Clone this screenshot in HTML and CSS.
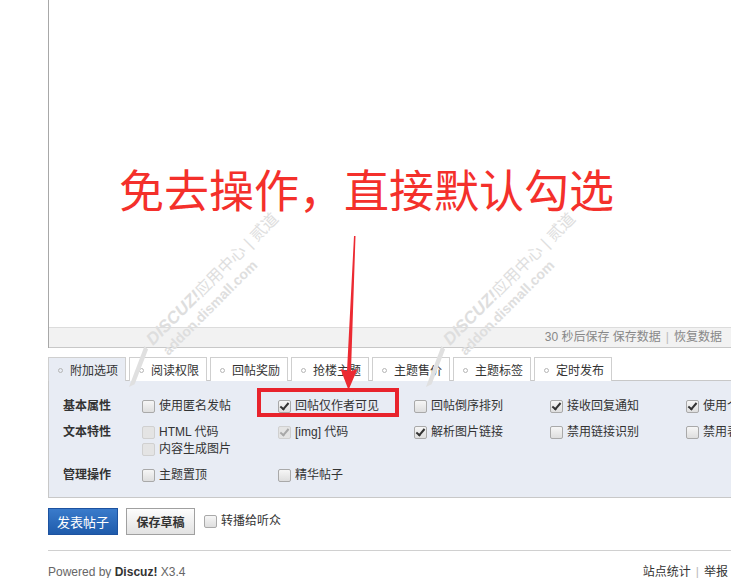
FILE: index.html
```html
<!DOCTYPE html>
<html lang="zh-CN">
<head>
    <meta charset="UTF-8">
    <title>发表帖子</title>
    <link rel="stylesheet" href="styles.css">
</head>
<body>
    <div class="page">
        <!-- Editor -->
        <div class="editor">
            <div class="editor-body">
                <p class="note">免去操作，直接默认勾选</p>
            </div>
            <div class="editor-status">30 秒后保存 <a>保存数据</a><span class="pipe">|</span><a>恢复数据</a></div>
        </div>

        <!-- Extra option tabs -->
        <ul class="tabs">
            <li class="tab active">附加选项</li>
            <li class="tab">阅读权限</li>
            <li class="tab">回帖奖励</li>
            <li class="tab">抢楼主题</li>
            <li class="tab">主题售价</li>
            <li class="tab">主题标签</li>
            <li class="tab">定时发布</li>
        </ul>

        <div class="options">
            <div class="opt-row">
                <span class="opt-label">基本属性</span>
                <label class="opt"><span class="cb"></span>使用匿名发帖</label>
                <label class="opt"><span class="cb checked"></span>回帖仅作者可见</label>
                <label class="opt"><span class="cb"></span>回帖倒序排列</label>
                <label class="opt"><span class="cb checked"></span>接收回复通知</label>
                <label class="opt"><span class="cb checked"></span>使用个人签名</label>
            </div>
            <div class="opt-row">
                <span class="opt-label">文本特性</span>
                <div class="opt-stack">
                    <label class="opt"><span class="cb disabled"></span>HTML 代码</label>
                    <label class="opt"><span class="cb disabled"></span>内容生成图片</label>
                </div>
                <label class="opt"><span class="cb checked disabled"></span>[img] 代码</label>
                <label class="opt"><span class="cb checked"></span>解析图片链接</label>
                <label class="opt"><span class="cb"></span>禁用链接识别</label>
                <label class="opt"><span class="cb"></span>禁用表情</label>
            </div>
            <div class="opt-row">
                <span class="opt-label">管理操作</span>
                <label class="opt"><span class="cb"></span>主题置顶</label>
                <label class="opt"><span class="cb"></span>精华帖子</label>
            </div>
        </div>

        <!-- Submit -->
        <div class="actions">
            <button class="btn btn-primary">发表帖子</button>
            <button class="btn btn-draft">保存草稿</button>
            <label class="opt"><span class="cb"></span>转播给听众</label>
        </div>

        <div class="footer">
            <p class="powered">Powered by <strong>Discuz!</strong> X3.4</p>
            <p class="footer-links"><a>站点统计</a><span class="pipe">|</span><a>举报</a></p>
        </div>
    </div>

    <!-- Annotation layer: watermarks, arrow, highlight box -->
    <svg class="overlay" width="731" height="578" viewBox="0 0 731 578">
        <g class="wm" transform="translate(153,346) rotate(-45)">
            <polygon class="wm-logo" points="-46,12 -6,-6 -6,-1 -40,14"/>
            <text class="wm-brand" x="0" y="0">DISCUZ!<tspan class="wm-cn">应用中心</tspan><tspan class="wm-cn" dx="5">| 贰道</tspan></text>
            <text class="wm-url" x="4" y="18">addon.dismall.com</text>
        </g>
        <g class="wm" transform="translate(450,346) rotate(-45)">
            <polygon class="wm-logo" points="-46,12 -6,-6 -6,-1 -40,14"/>
            <text class="wm-brand" x="0" y="0">DISCUZ!<tspan class="wm-cn">应用中心</tspan><tspan class="wm-cn" dx="5">| 贰道</tspan></text>
            <text class="wm-url" x="4" y="18">addon.dismall.com</text>
        </g>
        <polygon class="arrow" points="354,236 355.5,236 351,371 357.5,369 348.5,390 340.5,369 347,371"/>
        <rect class="highlight" x="259" y="390" width="138" height="25"/>
    </svg>
</body>
</html>
```

FILE: styles.css
```css
/* General */
html, body {
    overflow: hidden;
}

body {
    margin: 0;
    position: relative;
    width: 731px;
    height: 578px;
    background: #fff;
    color: #333;
    font-family: "Liberation Sans", "Noto Sans CJK SC", sans-serif;
    font-size: 12px;
    line-height: 17px;
}

a {
    color: inherit;
}

.page {
    margin-left: 48px;
    width: 683px;
}

/* Editor */
.editor {
    border-left: 1px solid #a8a8a8;
}

.editor-body {
    height: 327px;
    box-sizing: border-box;
    padding: 166px 0 0 70px;
}

.note {
    margin: 0;
    font-family: "Noto Sans CJK SC", sans-serif;
    font-size: 45px;
    line-height: 45px;
    color: #f4302b;
    white-space: nowrap;
}

.editor-status {
    height: 19px;
    line-height: 19px;
    border-top: 1px solid #dcdcdc;
    border-bottom: 1px solid #c8c8c8;
    background: #f2f2f2;
    color: #888;
    text-align: right;
    padding-right: 9px;
}

.pipe {
    margin: 0 5px;
    color: #bbb;
}

/* Tabs */
.tabs {
    list-style: none;
    margin: 9px 0 -1px;
    padding: 0;
    display: flex;
    gap: 3px;
    position: relative;
}

.tab {
    width: 78px;
    box-sizing: border-box;
    height: 24px;
    padding: 5px 0 0 9px;
    border: 1px solid #cfcfcf;
    border-bottom: none;
    background: #fff;
    white-space: nowrap;
}

.tab::before {
    content: "";
    display: inline-block;
    width: 3px;
    height: 3px;
    border: 1px solid #b5b5b5;
    border-radius: 50%;
    margin: 0 7px 2px 0;
    vertical-align: middle;
}

.tab.active {
    background: #e8ecf4;
}

/* Options panel */
.options {
    width: 800px;
    box-sizing: border-box;
    border: 1px solid #c8c8c8;
    background: #e8ecf4;
    padding: 17px 0 4px 14px;
}

.opt-row {
    display: grid;
    grid-template-columns: 79px repeat(5, 136px);
    align-items: start;
    margin-bottom: 9px;
}

.opt-label {
    font-weight: bold;
}

.opt-stack {
    display: flex;
    flex-direction: column;
}

.opt {
    display: flex;
    align-items: center;
    white-space: nowrap;
}

/* Checkboxes */
.cb {
    position: relative;
    width: 11px;
    height: 11px;
    margin-right: 4px;
    border: 1px solid #a9a9a9;
    border-radius: 2px;
    background: linear-gradient(#f6f6f6, #dedede);
    flex: none;
}

.cb.checked::after {
    content: "";
    position: absolute;
    left: 3px;
    top: 0;
    width: 3px;
    height: 7px;
    border: solid #333;
    border-width: 0 2px 2px 0;
    transform: rotate(40deg);
}

.cb.disabled {
    border-color: #d0d0d0;
    background: #e4e4e4;
}

.cb.disabled.checked::after {
    border-color: #a8a8a8;
}

/* Buttons */
.actions {
    display: flex;
    align-items: center;
    margin-top: 10px;
}

.btn {
    height: 27px;
    padding: 0;
    font-family: "Liberation Sans", "Noto Sans CJK SC", sans-serif;
    cursor: pointer;
}

.btn-primary {
    width: 70px;
    border: 1px solid #1d52a0;
    background: linear-gradient(#3a7bcb, #1f5bab);
    color: #fff;
    font-size: 13px;
}

.btn-draft {
    width: 69px;
    margin: 0 9px 0 8px;
    border: 1px solid #a0a0a0;
    background: linear-gradient(#fdfdfd, #e2e2e2);
    color: #333;
    font-size: 12px;
    font-weight: bold;
}

/* Footer */
.footer {
    margin-top: 15px;
    border-top: 1px solid #d0d0d0;
    padding: 13px 3px 0 0;
    display: flex;
    justify-content: space-between;
    color: #666;
}

.footer p {
    margin: 0;
}

.powered strong {
    color: #333;
}

.footer-links {
    color: #333;
}

/* Overlay */
.overlay {
    position: absolute;
    left: 0;
    top: 0;
    pointer-events: none;
}

.wm text {
    fill: #dedede;
    font-family: "Liberation Sans", "Noto Sans CJK SC", sans-serif;
}

.wm-brand {
    font-size: 17px;
    font-weight: bold;
    font-style: italic;
}

.wm-cn {
    font-weight: normal;
    font-style: normal;
    font-size: 16px;
}

.wm-url {
    font-size: 14px;
    font-weight: bold;
}

.wm-logo {
    fill: #e0e0e0;
}

.arrow {
    fill: #ec2a32;
}

.highlight {
    fill: none;
    stroke: #e8232c;
    stroke-width: 4;
}
```
